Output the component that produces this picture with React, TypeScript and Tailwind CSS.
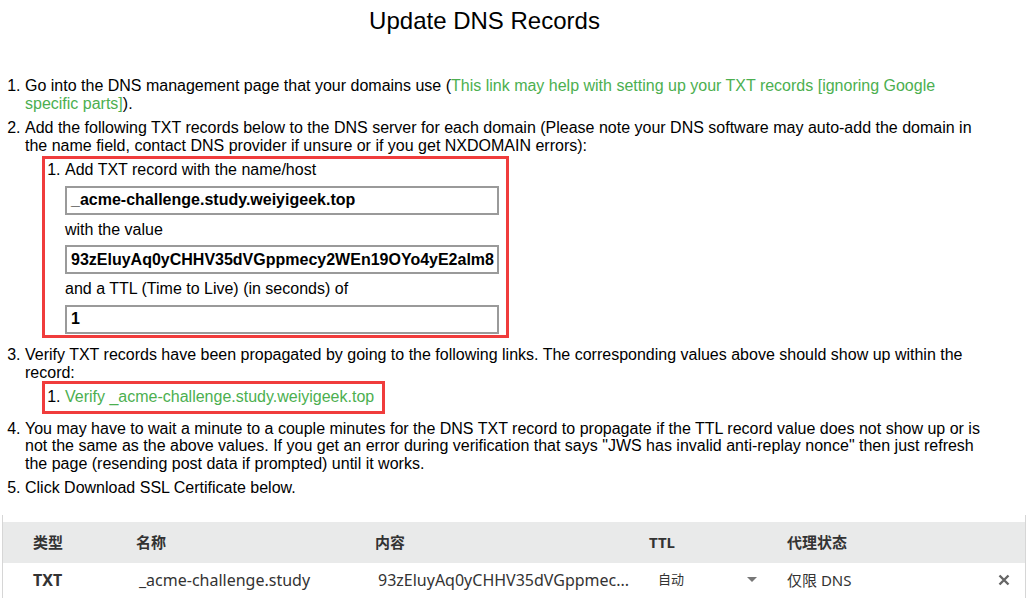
export default function App() {
  const green = "text-[#4caf50]";
  return (
    <div className="w-[1036px] h-[616px] bg-white overflow-hidden font-['Liberation_Sans',Arial,sans-serif] text-black">
      <div className="w-[980px] text-[16px] leading-[17.5px]">
        <h1 className="w-[969px] text-center text-[24px] leading-[28px] pt-[7px] font-normal">Update DNS Records</h1>
        <ol className="list-decimal pl-[25px] mt-[42px]">
          <li>
            Go into the DNS management page that your domains use (
            <span className={green}>
              This link may help with setting up your TXT records [ignoring Google specific parts]
            </span>
            ).
          </li>
          <li className="mt-[7px]">
            Add the following TXT records below to the DNS server for each domain (Please note your DNS software may
            auto-add the domain in the name field, contact DNS provider if unsure or if you get NXDOMAIN errors):
            <div className="mt-[2px] ml-[17px] w-[467px] border-[3px] border-[#f03c3c] pl-[20px] pt-[2px] pb-[1.5px]">
              <ol className="list-decimal">
                <li>
                  Add TXT record with the name/host
                  <div className="mt-[7px] mb-[6px] w-[434px] h-[29px] border-2 border-[#9a9a9a] pl-[4px] font-bold flex items-center overflow-hidden whitespace-nowrap">
                    _acme-challenge.study.weiyigeek.top
                  </div>
                  with the value
                  <div className="mt-[7px] mb-[6px] w-[434px] h-[29px] border-2 border-[#9a9a9a] pl-[4px] font-bold flex items-center overflow-hidden whitespace-nowrap">
                    93zEluyAq0yCHHV35dVGppmecy2WEn19OYo4yE2alm8
                  </div>
                  and a TTL (Time to Live) (in seconds) of
                  <div className="mt-[7px] w-[434px] h-[29px] border-2 border-[#9a9a9a] pl-[4px] font-bold flex items-center overflow-hidden whitespace-nowrap">
                    1
                  </div>
                </li>
              </ol>
            </div>
          </li>
          <li className="mt-[8px]">
            Verify TXT records have been propagated by going to the following links. The corresponding values above
            should show up within the record:
            <div className="ml-[17px] w-[343px] border-[3px] border-[#f03c3c] pl-[20px] pt-[4px] pb-[5px]">
              <ol className="list-decimal">
                <li>
                  <span className={green}>Verify _acme-challenge.study.weiyigeek.top</span>
                </li>
              </ol>
            </div>
          </li>
          <li className="mt-[6px]">
            You may have to wait a minute to a couple minutes for the DNS TXT record to propagate if the TTL record
            value does not show up or is not the same as the above values. If you get an error during verification
            that says "JWS has invalid anti-replay nonce" then just refresh the page (resending post data if prompted)
            until it works.
          </li>
          <li className="mt-[7px]">Click Download SSL Certificate below.</li>
        </ol>
      </div>

      <div className="mt-[18px] ml-[2px] w-[1024px] border-x border-[#d6d6d6] pt-[7px] font-['Noto_Sans','Noto_Sans_CJK_SC',sans-serif] text-[#333] text-[15px]">
        <div className="bg-[#e9eaea] h-[41px] flex items-center pl-[30px] font-bold">
          <div className="w-[103px]">类型</div>
          <div className="w-[239px]">名称</div>
          <div className="w-[274px]">内容</div>
          <div className="w-[138px]">TTL</div>
          <div>代理状态</div>
        </div>
        <div className="h-[35px] flex items-center pl-[30px]">
          <div className="w-[103px] font-bold text-[16px]">TXT</div>
          <div className="w-[239px] pl-[3px] text-[16px]">_acme-challenge.study</div>
          <div className="w-[274px] pl-[3px] whitespace-nowrap text-[16px]">93zEluyAq0yCHHV35dVGppmec...</div>
          <div className="w-[138px] pl-[9px] flex items-center">
            <span className="text-[13px] w-[89px]">自动</span>
            <svg width="10" height="6" viewBox="0 0 10 6">
              <path d="M0 0 L10 0 L5 5 Z" fill="#777" />
            </svg>
          </div>
          <div className="flex-1">仅限 DNS</div>
          <div className="pr-[15px]">
            <svg width="12" height="12" viewBox="0 0 12 12">
              <path d="M1.5 1.5 L10.5 10.5 M10.5 1.5 L1.5 10.5" stroke="#666" strokeWidth="2.4" />
            </svg>
          </div>
        </div>
      </div>
    </div>
  );
}
